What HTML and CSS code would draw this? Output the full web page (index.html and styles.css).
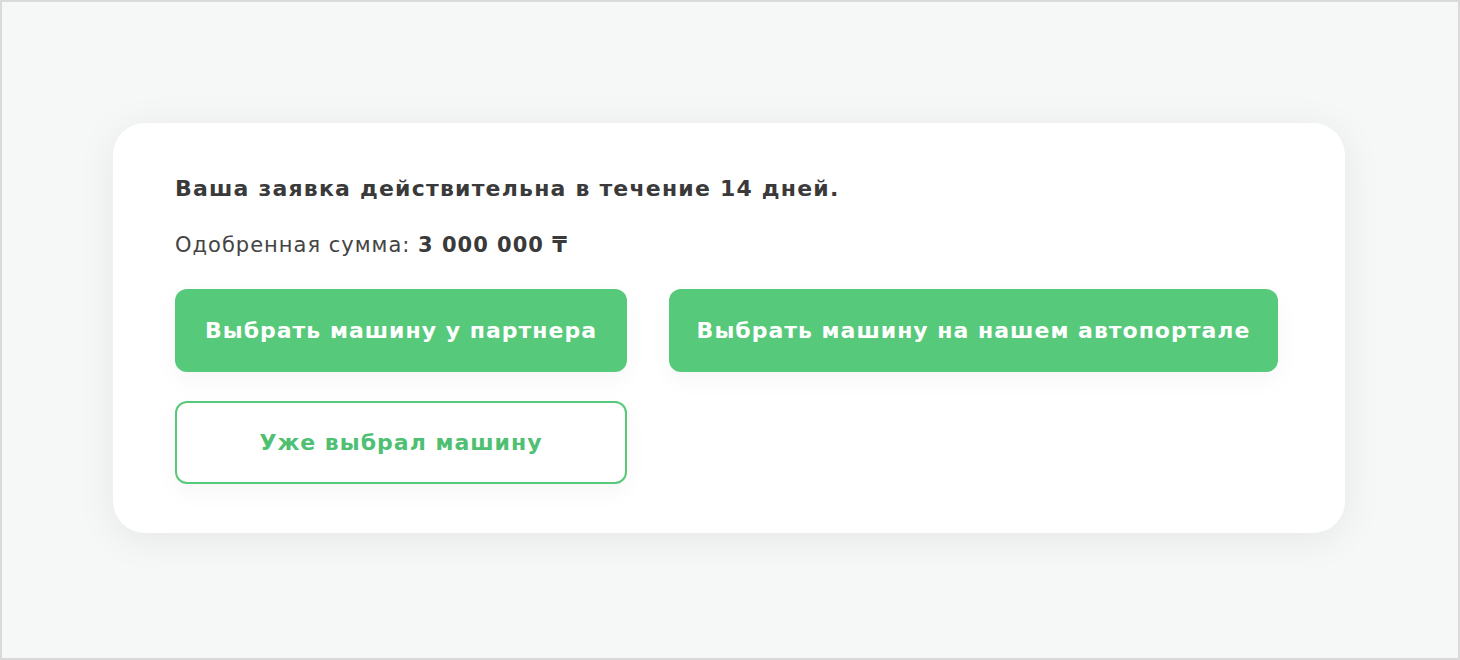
FILE: index.html
```html
<!DOCTYPE html>
<html lang="ru">
<head>
<meta charset="utf-8">
<link rel="stylesheet" href="styles.css">
</head>
<body>
<div class="frame">
  <div class="card">
    <h1 class="title">Ваша заявка действительна в течение 14 дней.</h1>
    <p class="amount">Одобренная сумма: <b>3 000 000 ₸</b></p>
    <div class="actions">
      <button class="btn btn-fill">Выбрать машину у партнера</button>
      <button class="btn btn-fill">Выбрать машину на нашем автопортале</button>
      <button class="btn btn-outline">Уже выбрал машину</button>
    </div>
  </div>
</div>
</body>
</html>
```
FILE: styles.css
```css
html, body {
  margin: 0;
  padding: 0;
}
body {
  font-family: "DejaVu Sans", "Noto Sans", sans-serif;
  color: #3a3a3a;
}
.frame {
  box-sizing: border-box;
  width: 1460px;
  height: 660px;
  border: 2px solid #dadada;
  background: #f6f7f7;
  display: flex;
  align-items: center;
  justify-content: center;
}
.card {
  box-sizing: border-box;
  width: 1232px;
  height: 410px;
  margin-left: -2px;
  margin-top: -5px;
  background: #fff;
  border-radius: 32px;
  box-shadow: 0 6px 40px rgba(0, 0, 0, 0.07);
  padding: 52px 62px 48px;
}
.title {
  margin: 0;
  font-size: 22px;
  font-weight: 700;
  line-height: 28px;
  letter-spacing: 1.2px;
  color: #3a3a3a;
}
.amount {
  margin: 30px 0 0;
  font-size: 21px;
  line-height: 24px;
  letter-spacing: 1px;
  color: #444;
  font-weight: 400;
}
.amount b {
  font-weight: 700;
  color: #3a3a3a;
}
.actions {
  margin-top: 32px;
  display: grid;
  grid-template-columns: 452px 609px;
  justify-content: start;
  column-gap: 42px;
  row-gap: 29px;
}
.btn {
  font-family: inherit;
  height: 83px;
  border-radius: 12px;
  font-size: 22px;
  font-weight: 700;
  letter-spacing: 1px;
  padding: 0 20px;
  cursor: pointer;
}
.btn-fill {
  background: #57c97b;
  border: none;
  color: #fff;
  box-shadow: 0 8px 24px rgba(0, 0, 0, 0.04);
}
.btn-outline {
  background: #fff;
  border: 2px solid #57c97b;
  color: #4fbf72;
  box-shadow: 0 8px 24px rgba(0, 0, 0, 0.04);
}
```
